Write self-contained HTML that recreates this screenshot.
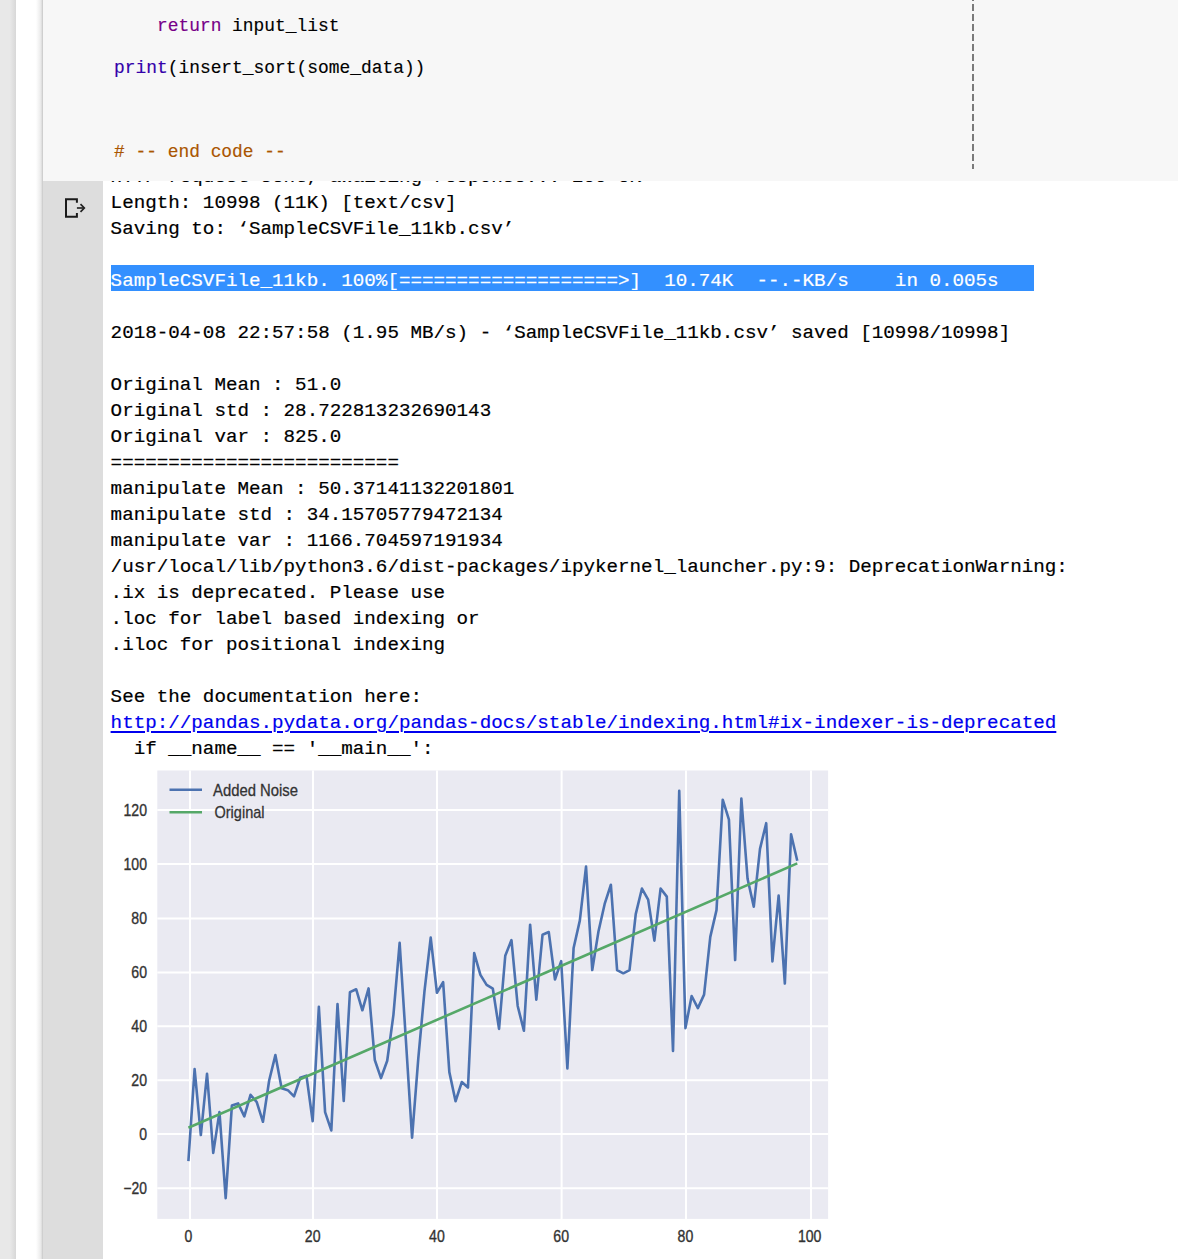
<!DOCTYPE html>
<html><head><meta charset="utf-8">
<style>
html,body{margin:0;padding:0;width:1178px;height:1259px;overflow:hidden;background:#fff;}
body{position:relative;}
.abs{position:absolute;}
#lstrip{left:0;top:0;width:16px;height:1259px;background:linear-gradient(to right,#e8e8e8 0px,#e8e8e8 10px,#d9d9d9 15.5px,#e0e0e0 16px);}
#wstrip{left:16px;top:0;width:27px;height:1259px;background:linear-gradient(to right,#ffffff 0px,#ffffff 20px,#e9e9e9 25px,#cfcfcf 26.5px,#d8d8d8 27px);}
#codebg{left:43px;top:0;width:1135px;height:181px;background:#f7f7f7;z-index:2;overflow:hidden;}
#gutter{left:43px;top:181px;width:60px;height:1078px;background:#dddddd;}
#dash{left:972px;top:0;width:2px;height:169px;z-index:3;background:repeating-linear-gradient(to bottom,#7a7a7a 0px,#7a7a7a 0.6px,transparent 0.6px,transparent 4.1px,#7a7a7a 4.1px,#7a7a7a 10px);}
pre{margin:0;white-space:pre;}
#code{left:114px;top:16.3px;font-family:"Liberation Mono",monospace;font-size:17.9px;line-height:21px;color:#000;z-index:3;-webkit-text-stroke:0.15px currentColor;}
.kw{color:#770088} .bi{color:#3300aa} .cm{color:#aa5500}
#out{left:110.6px;top:163.8px;font-family:"Liberation Mono",monospace;font-size:19.23px;line-height:26px;color:#000;z-index:1;-webkit-text-stroke:0.2px currentColor;}
#out{z-index:1;}
.hl{color:#fff;}
#hlbar{left:111px;top:265px;width:923px;height:26px;background:#3390ff;z-index:1;}
.lnk{color:#0000ee;text-decoration:underline;text-decoration-thickness:2px;text-underline-offset:3px;}
.chart{left:0;top:0;z-index:1;}
#icon{left:60px;top:193px;z-index:2;}
</style></head><body>
<div id="lstrip" class="abs"></div>
<div id="wstrip" class="abs"></div>
<div id="gutter" class="abs"></div>
<div id="codebg" class="abs"></div>
<div id="dash" class="abs"></div>
<div id="hlbar" class="abs"></div>
<pre id="code" class="abs">    <span class="kw">return</span> input_list

<span class="bi">print</span>(insert_sort(some_data))



<span class="cm"># -- end code --</span></pre>
<pre id="out" class="abs">HTTP request sent, awaiting response... 200 OK
Length: 10998 (11K) [text/csv]
Saving to: ‘SampleCSVFile_11kb.csv’

<span class="hl">SampleCSVFile_11kb. 100%[===================&gt;]  10.74K  --.-KB/s    in 0.005s   </span>

2018-04-08 22:57:58 (1.95 MB/s) - ‘SampleCSVFile_11kb.csv’ saved [10998/10998]

Original Mean : 51.0
Original std : 28.722813232690143
Original var : 825.0
=========================
manipulate Mean : 50.37141132201801
manipulate std : 34.15705779472134
manipulate var : 1166.704597191934
/usr/local/lib/python3.6/dist-packages/ipykernel_launcher.py:9: DeprecationWarning:
.ix is deprecated. Please use
.loc for label based indexing or
.iloc for positional indexing

See the documentation here:
<span class="lnk">http://pandas.pydata.org/pandas-docs/stable/indexing.html#ix-indexer-is-deprecated</span>
  if __name__ == '__main__':</pre>
<svg class="chart abs" width="1178" height="1259" viewBox="0 0 1178 1259">
<rect x="157.3" y="770.5" width="670.8" height="448.4" fill="#eaeaf2"/>
<g stroke="#ffffff" stroke-width="2"><line x1="190.00" y1="770.5" x2="190.00" y2="1218.9"/><line x1="313.00" y1="770.5" x2="313.00" y2="1218.9"/><line x1="437.00" y1="770.5" x2="437.00" y2="1218.9"/><line x1="561.60" y1="770.5" x2="561.60" y2="1218.9"/><line x1="686.00" y1="770.5" x2="686.00" y2="1218.9"/><line x1="811.00" y1="770.5" x2="811.00" y2="1218.9"/><line x1="157.3" y1="1188.20" x2="828.1" y2="1188.20"/><line x1="157.3" y1="1134.00" x2="828.1" y2="1134.00"/><line x1="157.3" y1="1080.20" x2="828.1" y2="1080.20"/><line x1="157.3" y1="1026.30" x2="828.1" y2="1026.30"/><line x1="157.3" y1="972.40" x2="828.1" y2="972.40"/><line x1="157.3" y1="918.40" x2="828.1" y2="918.40"/><line x1="157.3" y1="864.10" x2="828.1" y2="864.10"/><line x1="157.3" y1="810.10" x2="828.1" y2="810.10"/></g>
<polyline points="188.40,1161.20 194.61,1069.14 200.83,1135.01 207.04,1073.73 213.25,1152.83 219.47,1112.06 225.68,1198.18 231.89,1105.58 238.10,1103.42 244.32,1116.38 250.53,1094.78 256.74,1102.07 262.96,1121.78 269.17,1080.48 275.38,1055.10 281.60,1088.31 287.81,1090.19 294.02,1096.40 300.23,1077.78 306.45,1075.62 312.66,1121.24 318.87,1006.77 325.09,1112.06 331.30,1130.42 337.51,1004.07 343.73,1100.99 349.94,992.20 356.15,989.23 362.36,1010.28 368.58,988.42 374.79,1059.96 381.00,1078.05 387.22,1060.77 393.43,1014.87 399.64,942.79 405.86,1039.71 412.07,1137.71 418.28,1058.61 424.49,991.12 430.71,937.66 436.92,992.74 443.13,982.21 449.35,1072.11 455.56,1101.26 461.77,1082.10 467.99,1087.50 474.20,953.05 480.41,974.92 486.62,984.91 492.84,988.69 499.05,1028.91 505.26,955.75 511.48,940.09 517.69,1005.96 523.90,1030.80 530.12,924.70 536.33,999.75 542.54,934.69 548.75,931.99 554.97,979.51 561.18,961.15 567.39,1068.33 573.61,947.92 579.82,920.65 586.03,866.66 592.25,970.06 598.46,931.45 604.67,903.92 610.88,884.75 617.10,970.06 623.31,973.30 629.52,970.06 635.74,914.17 641.95,888.53 648.16,899.60 654.38,940.63 660.59,888.53 666.80,896.63 673.01,1051.05 679.23,790.80 685.44,1028.10 691.65,995.98 697.87,1008.12 704.08,994.63 710.29,936.85 716.50,910.12 722.72,799.71 728.93,819.68 735.14,960.07 741.36,798.63 747.57,878.81 753.78,906.62 760.00,848.84 766.21,823.19 772.42,961.42 778.63,895.55 784.85,983.56 791.06,834.26 797.27,860.72" fill="none" stroke="#4c72b0" stroke-width="2.6" stroke-linejoin="round" stroke-linecap="butt"/>
<polyline points="188.40,1127.72 797.27,863.42" fill="none" stroke="#55a868" stroke-width="2.6"/>
<g font-family="Liberation Sans, sans-serif" font-size="16.6" fill="#333333" stroke="#333333" stroke-width="0.35"><text x="188.40" y="1241.5" text-anchor="middle" textLength="7.8" lengthAdjust="spacingAndGlyphs">0</text><text x="312.66" y="1241.5" text-anchor="middle" textLength="15.7" lengthAdjust="spacingAndGlyphs">20</text><text x="436.92" y="1241.5" text-anchor="middle" textLength="15.7" lengthAdjust="spacingAndGlyphs">40</text><text x="561.18" y="1241.5" text-anchor="middle" textLength="15.7" lengthAdjust="spacingAndGlyphs">60</text><text x="685.44" y="1241.5" text-anchor="middle" textLength="15.7" lengthAdjust="spacingAndGlyphs">80</text><text x="809.70" y="1241.5" text-anchor="middle" textLength="23.5" lengthAdjust="spacingAndGlyphs">100</text><text x="147" y="1194.19" text-anchor="end" textLength="23.5" lengthAdjust="spacingAndGlyphs">−20</text><text x="147" y="1140.20" text-anchor="end" textLength="7.8" lengthAdjust="spacingAndGlyphs">0</text><text x="147" y="1086.21" text-anchor="end" textLength="15.7" lengthAdjust="spacingAndGlyphs">20</text><text x="147" y="1032.21" text-anchor="end" textLength="15.7" lengthAdjust="spacingAndGlyphs">40</text><text x="147" y="978.22" text-anchor="end" textLength="15.7" lengthAdjust="spacingAndGlyphs">60</text><text x="147" y="924.22" text-anchor="end" textLength="15.7" lengthAdjust="spacingAndGlyphs">80</text><text x="147" y="870.23" text-anchor="end" textLength="23.5" lengthAdjust="spacingAndGlyphs">100</text><text x="147" y="816.24" text-anchor="end" textLength="23.5" lengthAdjust="spacingAndGlyphs">120</text></g>
<line x1="169.5" y1="789.8" x2="202" y2="789.8" stroke="#4c72b0" stroke-width="2.6"/>
<line x1="169.5" y1="812.3" x2="202" y2="812.3" stroke="#55a868" stroke-width="2.6"/>
<g font-family="Liberation Sans, sans-serif" font-size="16.6" fill="#333333" stroke="#333333" stroke-width="0.3">
<text x="213" y="796" textLength="85" lengthAdjust="spacingAndGlyphs">Added Noise</text>
<text x="214.5" y="817.6" textLength="50" lengthAdjust="spacingAndGlyphs">Original</text>
</g>
</svg>
<svg id="icon" class="abs" width="30" height="30" viewBox="60 193 30 30">
<path d="M76.9 202.7 V199.15 H66 V216.7 H76.9 V213.1" fill="none" stroke="#1a1a1a" stroke-width="2" stroke-linejoin="miter"/>
<path d="M76.9 208 H84" fill="none" stroke="#333333" stroke-width="1.8"/>
<path d="M80.5 204.2 L84.3 208 L80.5 211.8" fill="none" stroke="#222222" stroke-width="1.7" stroke-linejoin="miter"/>
</svg>
</body></html>
